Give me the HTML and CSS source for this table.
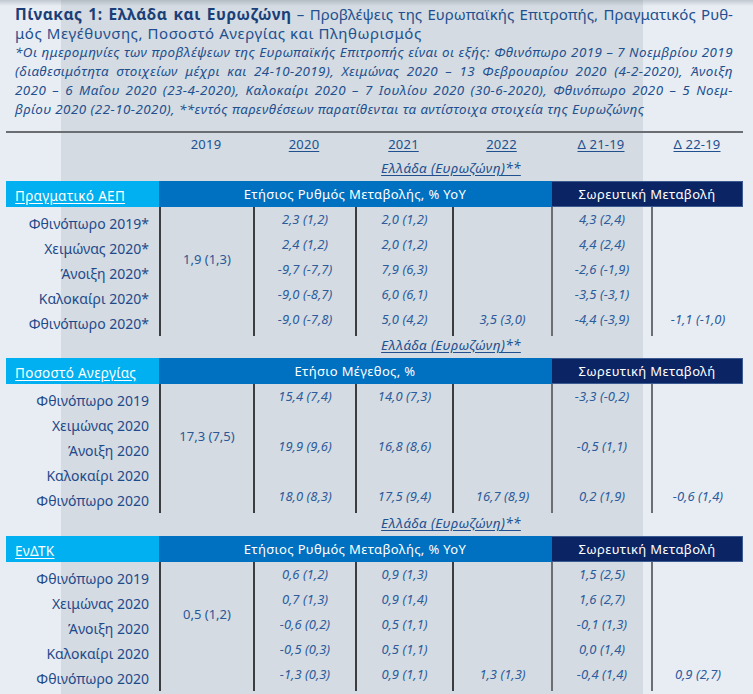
FILE: index.html
```html
<!DOCTYPE html>
<html lang="el">
<head>
<meta charset="utf-8">
<title>Πίνακας 1</title>
<link rel="stylesheet" href="styles.css">
</head>
<body>
<div class="page">
  <div class="title">
    <div class="jl first"><b>Πίνακας 1: Ελλάδα και Ευρωζώνη</b> – Προβλέψεις της Ευρωπαϊκής Επιτροπής, Πραγματικός Ρυθ-</div>
    <div class="second">μός Μεγέθυνσης, Ποσοστό Ανεργίας και Πληθωρισμός</div>
  </div>
  <div class="notes">
    <div class="jl">*Οι ημερομηνίες των προβλέψεων της Ευρωπαϊκής Επιτροπής είναι οι εξής: Φθινόπωρο 2019 – 7 Νοεμβρίου 2019</div>
    <div class="jl">(διαθεσιμότητα στοιχείων μέχρι και 24-10-2019), Χειμώνας 2020 – 13 Φεβρουαρίου 2020 (4-2-2020), Άνοιξη</div>
    <div class="jl">2020 – 6 Μαΐου 2020 (23-4-2020), Καλοκαίρι 2020 – 7 Ιουλίου 2020 (30-6-2020), Φθινόπωρο 2020 – 5 Νοεμ-</div>
    <div>βρίου 2020 (22-10-2020), **εντός παρενθέσεων παρατίθενται τα αντίστοιχα στοιχεία της Ευρωζώνης</div>
  </div>

  <div class="table">
    <div class="years">
      <span></span><span>2019</span><span class="u">2020</span><span class="u">2021</span><span class="u">2022</span><span class="u">Δ 21-19</span><span class="u">Δ 22-19</span>
    </div>

    <div class="caption"><span>Ελλάδα (Ευρωζώνη)**</span></div>
    <div class="bar">
      <div class="bar-label"><span>Πραγματικό ΑΕΠ</span></div>
      <div class="bar-mid">Ετήσιος Ρυθμός Μεταβολής, % YoY</div>
      <div class="bar-cum">Σωρευτική Μεταβολή</div>
    </div>
    <div class="body b1">
      <div class="col labels">
        <div>Φθινόπωρο 2019*</div><div>Χειμώνας 2020*</div><div>Άνοιξη 2020*</div><div>Καλοκαίρι 2020*</div><div>Φθινόπωρο 2020*</div>
      </div>
      <div class="col base"><div>1,9 (1,3)</div></div>
      <div class="col num"><div>2,3 (1,2)</div><div>2,4 (1,2)</div><div>-9,7 (-7,7)</div><div>-9,0 (-8,7)</div><div>-9,0 (-7,8)</div></div>
      <div class="col num"><div>2,0 (1,2)</div><div>2,0 (1,2)</div><div>7,9 (6,3)</div><div>6,0 (6,1)</div><div>5,0 (4,2)</div></div>
      <div class="col num"><div></div><div></div><div></div><div></div><div>3,5 (3,0)</div></div>
      <div class="col num grey"><div>4,3 (2,4)</div><div>4,4 (2,4)</div><div>-2,6 (-1,9)</div><div>-3,5 (-3,1)</div><div>-4,4 (-3,9)</div></div>
      <div class="col num grey"><div></div><div></div><div></div><div></div><div>-1,1 (-1,0)</div></div>
    </div>

    <div class="caption"><span>Ελλάδα (Ευρωζώνη)**</span></div>
    <div class="bar">
      <div class="bar-label"><span>Ποσοστό Ανεργίας</span></div>
      <div class="bar-mid">Ετήσιο Μέγεθος, %</div>
      <div class="bar-cum">Σωρευτική Μεταβολή</div>
    </div>
    <div class="body">
      <div class="col labels">
        <div>Φθινόπωρο 2019</div><div>Χειμώνας 2020</div><div>Άνοιξη 2020</div><div>Καλοκαίρι 2020</div><div>Φθινόπωρο 2020</div>
      </div>
      <div class="col base"><div>17,3 (7,5)</div></div>
      <div class="col num"><div>15,4 (7,4)</div><div></div><div>19,9 (9,6)</div><div></div><div>18,0 (8,3)</div></div>
      <div class="col num"><div>14,0 (7,3)</div><div></div><div>16,8 (8,6)</div><div></div><div>17,5 (9,4)</div></div>
      <div class="col num"><div></div><div></div><div></div><div></div><div>16,7 (8,9)</div></div>
      <div class="col num grey"><div>-3,3 (-0,2)</div><div></div><div>-0,5 (1,1)</div><div></div><div>0,2 (1,9)</div></div>
      <div class="col num grey"><div></div><div></div><div></div><div></div><div>-0,6 (1,4)</div></div>
    </div>

    <div class="caption"><span>Ελλάδα (Ευρωζώνη)**</span></div>
    <div class="bar">
      <div class="bar-label"><span>ΕνΔΤΚ</span></div>
      <div class="bar-mid">Ετήσιος Ρυθμός Μεταβολής, % YoY</div>
      <div class="bar-cum">Σωρευτική Μεταβολή</div>
    </div>
    <div class="body">
      <div class="col labels">
        <div>Φθινόπωρο 2019</div><div>Χειμώνας 2020</div><div>Άνοιξη 2020</div><div>Καλοκαίρι 2020</div><div>Φθινόπωρο 2020</div>
      </div>
      <div class="col base"><div>0,5 (1,2)</div></div>
      <div class="col num"><div>0,6 (1,2)</div><div>0,7 (1,3)</div><div>-0,6 (0,2)</div><div>-0,5 (0,3)</div><div>-1,3 (0,3)</div></div>
      <div class="col num"><div>0,9 (1,3)</div><div>0,9 (1,4)</div><div>0,5 (1,1)</div><div>0,5 (1,1)</div><div>0,9 (1,1)</div></div>
      <div class="col num"><div></div><div></div><div></div><div></div><div>1,3 (1,3)</div></div>
      <div class="col num grey"><div>1,5 (2,5)</div><div>1,6 (2,7)</div><div>-0,1 (1,3)</div><div>0,0 (1,4)</div><div>-0,4 (1,4)</div></div>
      <div class="col num grey"><div></div><div></div><div></div><div></div><div>0,9 (2,7)</div></div>
    </div>
  </div>
</div>
</body>
</html>
```

FILE: styles.css
```css
* { box-sizing: border-box; }

html, body {
  margin: 0;
  padding: 0;
}

body {
  width: 753px;
  height: 694px;
  overflow: hidden;
  font-family: "Noto Sans", "DejaVu Sans", sans-serif;
  color: #214b8c;
  background:
    linear-gradient(to bottom, rgba(120, 130, 140, 0.35), rgba(120, 130, 140, 0) 6px),
    linear-gradient(to right, #e8edf4 61px, #d4dbe2 61px, #d4dbe2 643px, #e8edf4 643px);
}

.page {
  padding: 5px 0 0 0;
}

.title,
.notes {
  margin-left: 15px;
  width: 718px;
  line-height: 19px;
}

.title {
  font-size: 15px;
  color: #22508f;
}

.title .first {
  letter-spacing: 0.02px;
}

.title .second {
  letter-spacing: 0.55px;
}

.title b {
  font-size: 15.5px;
  font-weight: 700;
  letter-spacing: 0.5px;
  color: #1a3f78;
}

.notes {
  font-size: 13.4px;
  letter-spacing: 0.45px;
  font-style: italic;
  color: #22508f;
}

.jl {
  text-align: justify;
  text-align-last: justify;
  white-space: nowrap;
}

.table {
  margin: 12px 0 0 6px;
  width: 737px;
}

.years,
.bar,
.body {
  display: grid;
  grid-template-columns: 153px 94px 102px 97px 99px 100px 92px;
}

.years {
  border-top: 2px solid #6a6e73;
  height: 24px;
  align-items: center;
  font-size: 13px;
  letter-spacing: 0.2px;
  text-align: center;
  color: #21508f;
}

.u {
  text-decoration: underline;
  text-underline-offset: 2px;
}

.caption {
  height: 26px;
  padding-left: 153px;
  display: flex;
  align-items: center;
  justify-content: center;
  font-size: 13.5px;
  letter-spacing: 0.4px;
  font-style: italic;
  color: #21508f;
}

.caption span {
  text-decoration: underline;
  text-underline-offset: 2px;
}

.bar {
  height: 26px;
  font-size: 13px;
  letter-spacing: 0.35px;
  color: #ffffff;
}

.bar-label {
  background: #00b0f0;
  padding: 6px 0 0 9px;
  font-size: 13.5px;
  letter-spacing: 0.3px;
}

.bar-label span {
  text-decoration: underline;
  text-underline-offset: 2px;
}

.bar-mid {
  grid-column: span 4;
  background: #0070c0;
  display: flex;
  align-items: center;
  justify-content: center;
}

.bar-cum {
  grid-column: span 2;
  background: #0b2463;
  border: 1px solid #3c5a92;
  display: flex;
  align-items: center;
  justify-content: center;
}

.body {
  height: 126px;
}

.body.b1 {
  height: 125px;
}

.col {
  display: flex;
  flex-direction: column;
}

.col > div {
  height: 25px;
  line-height: 25px;
  white-space: nowrap;
}

.labels {
  padding: 4px 10px 0 0;
  text-align: right;
  font-size: 14px;
  color: #1f4a8a;
}

.base {
  border-left: 2px solid #3b3d40;
  padding-top: 40px;
  text-align: center;
  font-size: 13px;
  color: #2a5896;
}

.num {
  border-left: 2px solid #3b3d40;
  text-align: center;
  font-size: 13px;
  font-style: italic;
  color: #2d5c9c;
}

.num.grey {
  border-left-color: #6b6f74;
}
```
